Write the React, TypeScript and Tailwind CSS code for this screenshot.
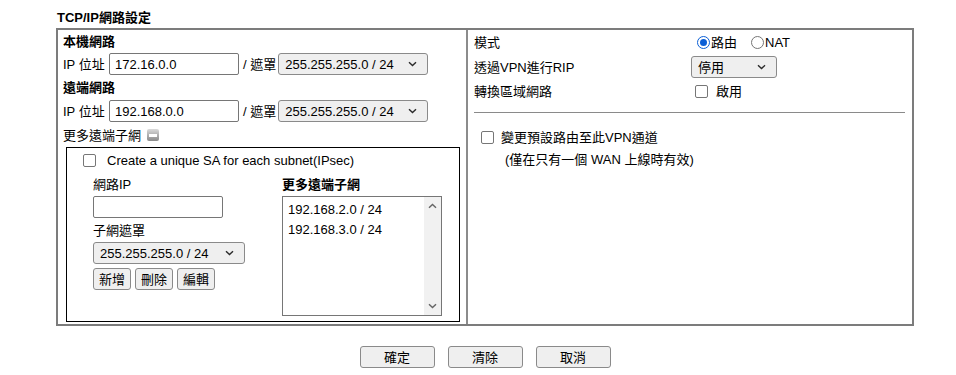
import React from 'react';

const box = 'border border-[#767676] rounded-[2px] bg-white';

function Chevron({ className = '' }: { className?: string }) {
  return (
    <svg width="9" height="6" viewBox="0 0 9 6" className={className}>
      <path d="M1 1.2 4.5 4.6 8 1.2" fill="none" stroke="#2b2b2b" strokeWidth="1.4" />
    </svg>
  );
}

function Select({ value, width }: { value: string; width: string }) {
  return (
    <div
      className={`${width} h-[22px] flex items-center justify-between pl-[6px] pr-[10px] border border-[#8a8a8a] rounded-[3px] bg-[#efefef]`}
    >
      <span>{value}</span>
      <Chevron />
    </div>
  );
}

function Checkbox() {
  return <span className="inline-block shrink-0 w-[13px] h-[13px] border border-[#767676] rounded-[2px] bg-white" />;
}

function Radio({ checked }: { checked?: boolean }) {
  return checked ? (
    <span className="shrink-0 w-[13px] h-[13px] rounded-full border-[1.5px] border-[#0b5fd6] flex items-center justify-center">
      <span className="w-[7px] h-[7px] rounded-full bg-[#0b5fd6]" />
    </span>
  ) : (
    <span className="shrink-0 block w-[13px] h-[13px] rounded-full border border-[#767676] bg-white" />
  );
}

function Btn({ label, className = '' }: { label: string; className?: string }) {
  return (
    <button className={`h-[22px] flex items-center justify-center px-[5px] border border-[#8a8a8a] rounded-[3px] bg-[#efefef] ${className}`}>
      {label}
    </button>
  );
}

export default function App() {
  return (
    <div className="w-[956px] h-[375px] bg-white text-black text-[13px] leading-none font-[family-name:'Liberation_Sans','Noto_Sans_CJK_TC',sans-serif]">
      <div className="h-[28px] pl-[57px] flex items-center pt-[6px] font-bold">TCP/IP網路設定</div>

      <div className="ml-[56px] w-[858px] h-[298px] border-2 border-[#7c7c7c] flex">
        {/* Left: local / remote networks */}
        <div className="w-[410px] border-r-2 border-[#8c8c8c] pl-[5px]">
          <div className="h-[22px] flex items-center font-bold">本機網路</div>
          <div className="h-[24px] flex items-center">
            <span className="w-[46px]">IP 位址</span>
            <div className={`${box} w-[130px] h-[22px] flex items-center px-[5px]`}>172.16.0.0</div>
            <span className="ml-[4px] mr-[2px]">/ 遮罩</span>
            <Select value="255.255.255.0 / 24" width="w-[150px]" />
          </div>
          <div className="h-[23px] flex items-center font-bold">遠端網路</div>
          <div className="h-[24px] flex items-center">
            <span className="w-[46px]">IP 位址</span>
            <div className={`${box} w-[130px] h-[22px] flex items-center px-[5px]`}>192.168.0.0</div>
            <span className="ml-[4px] mr-[2px]">/ 遮罩</span>
            <Select value="255.255.255.0 / 24" width="w-[150px]" />
          </div>
          <div className="h-[24px] flex items-center gap-[6px]">
            <span>更多遠端子網</span>
            <span className="w-[12px] h-[12px] rounded-[2px] bg-gradient-to-b from-[#dadada] to-[#8a8a8a] flex items-center justify-center">
              <span className="w-[8px] h-[3px] bg-white" />
            </span>
          </div>

          <div className="ml-[3px] w-[394px] h-[175px] border border-black">
            <div className="h-[24px] flex items-center pl-[16px] gap-[11px]">
              <Checkbox />
              <span>Create a unique SA for each subnet(IPsec)</span>
            </div>
            <div className="flex pl-[26px]">
              <div className="w-[189px]">
                <div className="h-[24px] flex items-center">網路IP</div>
                <div className={`${box} w-[130px] h-[22px]`} />
                <div className="h-[24px] flex items-center">子網遮罩</div>
                <Select value="255.255.255.0 / 24" width="w-[152px]" />
                <div className="flex gap-[4px] mt-[4px]">
                  <Btn label="新增" />
                  <Btn label="刪除" />
                  <Btn label="編輯" />
                </div>
              </div>
              <div>
                <div className="h-[24px] flex items-center font-bold">更多遠端子網</div>
                <div className="w-[160px] h-[120px] border border-[#767676] flex">
                  <div className="flex-1 pl-[5px] pt-[6px] flex flex-col gap-[7px]">
                    <span>192.168.2.0 / 24</span>
                    <span>192.168.3.0 / 24</span>
                  </div>
                  <div className="w-[17px] bg-[#f1f1f1] flex flex-col items-center justify-between py-[6px]">
                    <Chevron className="rotate-180 opacity-70" />
                    <Chevron className="opacity-70" />
                  </div>
                </div>
              </div>
            </div>
          </div>
        </div>

        {/* Right: mode options */}
        <div className="flex-1 pl-[6px] pr-[7px]">
          <div className="grid grid-cols-[217px_1fr]">
            <div className="h-[25px] flex items-center">模式</div>
            <div className="h-[25px] flex items-center pl-[6px]">
              <Radio checked />
              <span className="ml-[1px]">路由</span>
              <span className="ml-[14px] flex">
                <Radio />
              </span>
              <span className="ml-[1px]">NAT</span>
            </div>
            <div className="h-[24px] flex items-center">透過VPN進行RIP</div>
            <div className="h-[24px] flex items-center">
              <Select value="停用" width="w-[86px]" />
            </div>
            <div className="h-[25px] flex items-center">轉換區域網路</div>
            <div className="h-[25px] flex items-center pl-[4px] gap-[8px]">
              <Checkbox />
              <span>啟用</span>
            </div>
          </div>
          <div className="mt-[8px] h-[1px] bg-[#8a8a8a]" />
          <div className="mt-[12px] h-[24px] flex items-center pl-[7px] gap-[7px]">
            <Checkbox />
            <span>變更預設路由至此VPN通道</span>
          </div>
          <div className="h-[20px] flex items-center pl-[31px]">(僅在只有一個 WAN 上線時有效)</div>
        </div>
      </div>

      <div className="ml-[56px] w-[858px] mt-[20px] flex justify-center gap-[13px]">
        <Btn label="確定" className="w-[75px] h-[21px]" />
        <Btn label="清除" className="w-[75px] h-[21px]" />
        <Btn label="取消" className="w-[75px] h-[21px]" />
      </div>
    </div>
  );
}
